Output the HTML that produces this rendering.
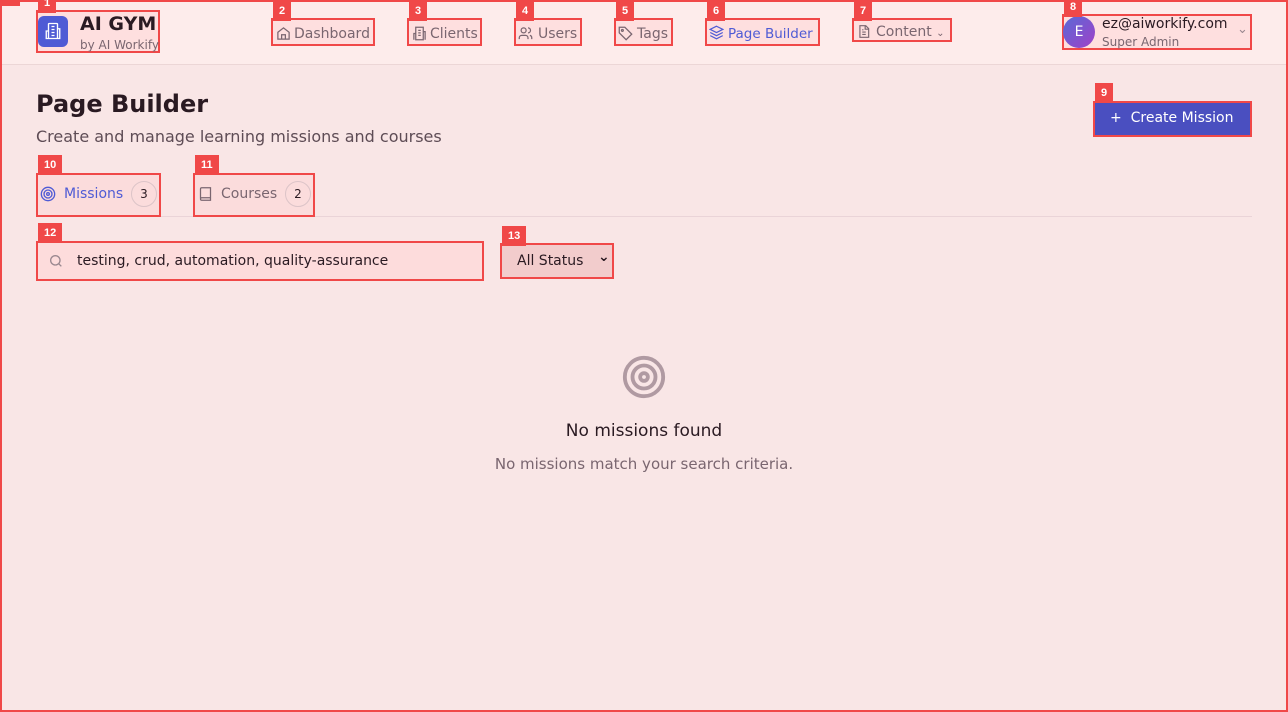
<!DOCTYPE html>
<html><head><meta charset="utf-8"><style>
*{box-sizing:border-box;margin:0;padding:0}
body{width:1288px;height:712px;overflow:hidden;background:#f9e6e6;font-family:"DejaVu Sans","Liberation Sans",sans-serif;position:relative;color:#2a1a22}
.frame{position:absolute;left:0;top:0;width:1288px;height:712px;border:2px solid #f04848;pointer-events:none;z-index:5}
.hdr{position:absolute;left:0;top:0;width:1288px;height:65px;background:#fdeceb;border-bottom:1px solid #ecd6d6}
.b{position:absolute;border:2px solid #f04848;background:rgba(255,200,200,.35)}
.tag{position:absolute;background:#f04848;color:#fff;font-size:11px;font-weight:bold;height:20px;line-height:20px;padding:0 6px;font-family:"Liberation Sans",sans-serif;z-index:6}
.t{position:absolute;white-space:nowrap}
.nav{font-size:14px;color:#7a6670}
svg{position:absolute}
</style></head><body>
<div class="hdr"></div>
<div class="frame"></div>
<div class="tag" style="left:0;top:-14px;width:20px"></div>

<div class="b" style="left:36px;top:10px;width:124px;height:43px"></div>
<div class="tag" style="left:38px;top:-7px">1</div>
<div style="position:absolute;left:38px;top:16px;width:30px;height:31px;background:#4f5bd5;border-radius:6px"></div>
<svg style="left:44px;top:22px" width="18" height="18" viewBox="0 0 24 24" fill="none" stroke="#fff" stroke-width="1.8"><rect x="6" y="2" width="12" height="20" rx="1"/><path d="M6 12H3v10h3M18 9h3v13h-3M10 6h4M10 10h4M10 14h4M10 18h4"/></svg>
<div class="t" style="left:80px;top:13px;font-size:19px;font-weight:bold">AI GYM</div>
<div class="t" style="left:80px;top:38px;font-size:12px;color:#7a6670">by AI Workify</div>

<div class="b" style="left:271px;top:18px;width:104px;height:28px"></div><div class="tag" style="left:273px;top:1px">2</div>
<svg style="left:276px;top:26px" width="15" height="15" viewBox="0 0 24 24" fill="none" stroke="#7a6670" stroke-width="2"><path d="M3 10l9-7 9 7v11H3z"/><path d="M9 21v-7h6v7"/></svg>
<div class="t nav" style="left:294px;top:26px">Dashboard</div>
<div class="b" style="left:407px;top:18px;width:75px;height:28px"></div><div class="tag" style="left:409px;top:1px">3</div>
<svg style="left:412px;top:26px" width="15" height="15" viewBox="0 0 24 24" fill="none" stroke="#7a6670" stroke-width="2"><rect x="6" y="2" width="12" height="20"/><path d="M6 12H3v10M18 9h3v13M10 7h4M10 11h4M10 15h4"/></svg>
<div class="t nav" style="left:430px;top:26px">Clients</div>
<div class="b" style="left:514px;top:18px;width:68px;height:28px"></div><div class="tag" style="left:516px;top:1px">4</div>
<svg style="left:518px;top:26px" width="15" height="15" viewBox="0 0 24 24" fill="none" stroke="#7a6670" stroke-width="2"><circle cx="9" cy="7" r="4"/><path d="M2 21v-2a4 4 0 0 1 4-4h6a4 4 0 0 1 4 4v2M16 3a4 4 0 0 1 0 8M22 21v-2a4 4 0 0 0-3-4"/></svg>
<div class="t nav" style="left:538px;top:26px">Users</div>
<div class="b" style="left:614px;top:18px;width:59px;height:28px"></div><div class="tag" style="left:616px;top:1px">5</div>
<svg style="left:618px;top:26px" width="15" height="15" viewBox="0 0 24 24" fill="none" stroke="#7a6670" stroke-width="2"><path d="M2 2h9l11 11-9 9L2 11z"/><circle cx="7" cy="7" r="1.5"/></svg>
<div class="t nav" style="left:637px;top:26px">Tags</div>
<div class="b" style="left:705px;top:18px;width:115px;height:28px"></div><div class="tag" style="left:707px;top:1px">6</div>
<svg style="left:709px;top:25px" width="15" height="15" viewBox="0 0 24 24" fill="none" stroke="#4f5bd5" stroke-width="2"><path d="M12 2l10 5-10 5L2 7z M2 12l10 5 10-5M2 17l10 5 10-5"/></svg>
<div class="t nav" style="left:728px;top:26px;color:#4f5bd5;font-size:13.5px">Page Builder</div>
<div class="b" style="left:852px;top:18px;width:100px;height:24px"></div><div class="tag" style="left:854px;top:1px">7</div>
<svg style="left:857px;top:24px" width="14" height="15" viewBox="0 0 24 24" fill="none" stroke="#7a6670" stroke-width="2"><path d="M5 2h10l5 5v15H5z M14 2v6h6M9 13h6M9 17h6M9 9h2"/></svg>
<div class="t nav" style="left:876px;top:24px">Content <span style="font-size:10px">⌄</span></div>

<div class="b" style="left:1062px;top:14px;width:190px;height:36px"></div><div class="tag" style="left:1064px;top:-3px">8</div>
<div style="position:absolute;left:1063px;top:16px;width:32px;height:32px;border-radius:50%;background:linear-gradient(135deg,#5a6ad6,#a040c8);color:#fff;font-size:14px;text-align:center;line-height:32px">E</div>
<div class="t" style="left:1102px;top:16px;font-size:14px">ez@aiworkify.com</div>
<div class="t" style="left:1102px;top:35px;font-size:12px;color:#7a6670">Super Admin</div>
<div class="t" style="left:1237px;top:22px;font-size:13px;color:#9a8890">⌄</div>

<div class="t" style="left:36px;top:90px;font-size:24px;font-weight:bold">Page Builder</div>
<div class="t" style="left:36px;top:127px;font-size:16px;color:#5e4c55">Create and manage learning missions and courses</div>
<div class="b" style="left:1093px;top:101px;width:159px;height:36px;background:#4a4fc0"></div><div class="tag" style="left:1095px;top:83px">9</div>
<div class="t" style="left:1110px;top:110px;font-size:14px;color:#fff">+&nbsp; Create Mission</div>

<div style="position:absolute;left:36px;top:216px;width:1216px;height:1px;background:#ead4d8"></div>
<div class="b" style="left:36px;top:173px;width:125px;height:44px"></div><div class="tag" style="left:38px;top:155px">10</div>
<svg style="left:40px;top:186px" width="16" height="16" viewBox="0 0 24 24" fill="none" stroke="#4f5bd5" stroke-width="2"><circle cx="12" cy="12" r="10"/><circle cx="12" cy="12" r="6"/><circle cx="12" cy="12" r="2"/></svg>
<div class="t" style="left:64px;top:186px;font-size:14px;color:#4f5bd5">Missions</div>
<div style="position:absolute;left:131px;top:181px;width:26px;height:26px;border-radius:50%;border:1px solid #dcc4c8;font-size:12px;text-align:center;line-height:24px">3</div>
<div class="b" style="left:193px;top:173px;width:122px;height:44px"></div><div class="tag" style="left:195px;top:155px">11</div>
<svg style="left:198px;top:186px" width="15" height="16" viewBox="0 0 24 24" fill="none" stroke="#7a6670" stroke-width="2"><path d="M4 19V4a2 2 0 0 1 2-2h14v20H6a2 2 0 0 1-2-2 2 2 0 0 1 2-2h14"/></svg>
<div class="t" style="left:221px;top:186px;font-size:14px;color:#7a6670">Courses</div>
<div style="position:absolute;left:285px;top:181px;width:26px;height:26px;border-radius:50%;border:1px solid #dcc4c8;font-size:12px;text-align:center;line-height:24px">2</div>

<div class="b" style="left:36px;top:241px;width:448px;height:40px;background:#fddcdc"></div><div class="tag" style="left:38px;top:223px">12</div>
<svg style="left:48px;top:253px" width="16" height="16" viewBox="0 0 24 24" fill="none" stroke="#9a8890" stroke-width="2"><circle cx="11" cy="11" r="7"/><path d="M20 20l-4-4"/></svg>
<div class="t" style="left:77px;top:253px;font-size:14px">testing, crud, automation, quality-assurance</div>
<div class="b" style="left:500px;top:243px;width:114px;height:36px;background:#f2cccc"></div><div class="tag" style="left:502px;top:226px">13</div>
<div class="t" style="left:517px;top:253px;font-size:14px">All Status</div>
<div class="t" style="left:598px;top:249px;font-size:14px;font-weight:bold">⌄</div>

<svg style="left:621px;top:354px" width="46" height="46" viewBox="0 0 24 24" fill="none" stroke="#b09aa2" stroke-width="2"><circle cx="12" cy="12" r="10"/><circle cx="12" cy="12" r="6"/><circle cx="12" cy="12" r="2"/></svg>
<div class="t" style="left:0;width:1288px;text-align:center;top:421px;font-size:17px">No missions found</div>
<div class="t" style="left:0;width:1288px;text-align:center;top:455px;font-size:15px;color:#7a6670">No missions match your search criteria.</div>
</body></html>
